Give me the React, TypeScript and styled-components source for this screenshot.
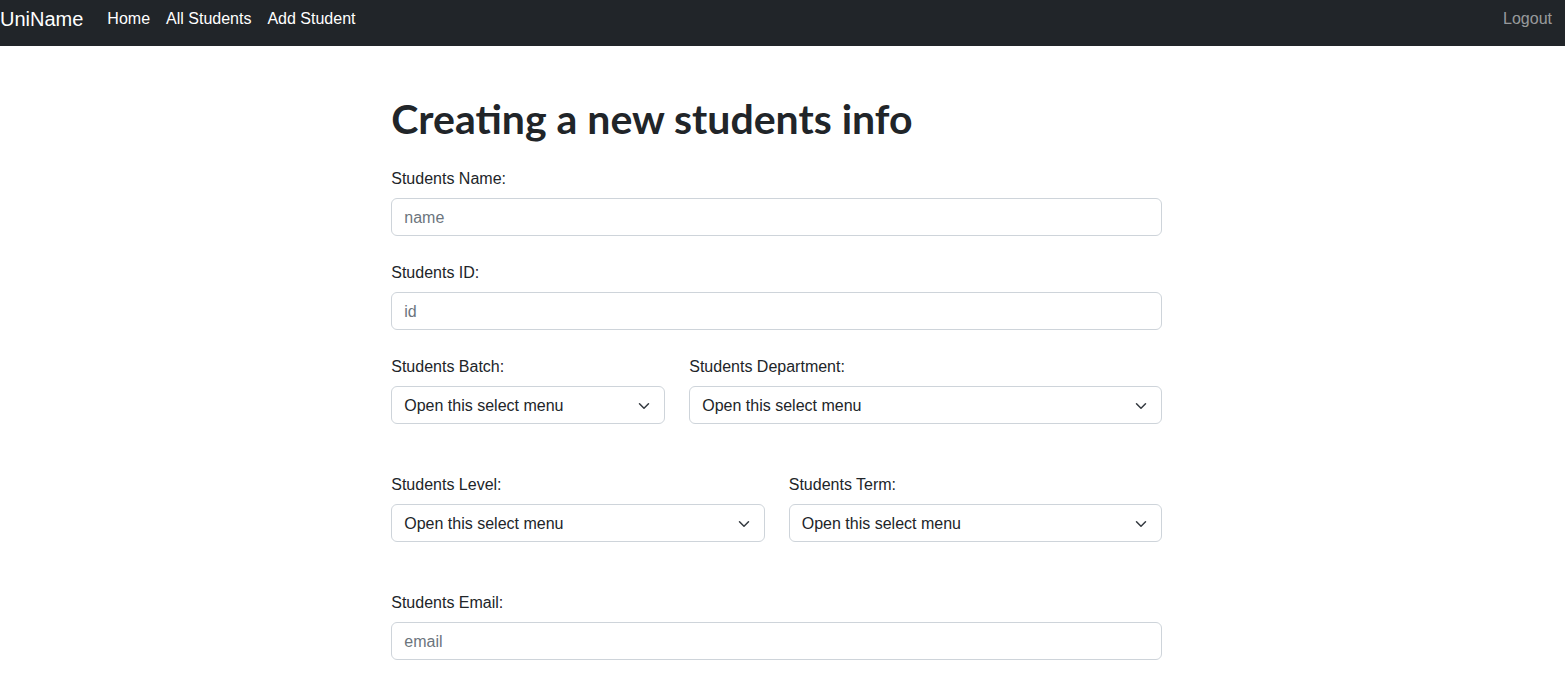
import React from 'react'
import styled, { createGlobalStyle } from 'styled-components'

const GlobalStyle = createGlobalStyle`
  * { box-sizing: border-box; }
  body {
    margin: 0;
    background: #fff;
    color: #212529;
    font-family: 'Liberation Sans', Arial, sans-serif;
    font-size: 16px;
    line-height: 1.5;
  }
`

const NavBar = styled.nav`
  height: 46px;
  background: #212529;
  display: flex;
  align-items: center;
  padding: 0 5px 8px 0;
`

const Brand = styled.a`
  color: #fff;
  font-size: 20px;
  line-height: 30px;
  margin-right: 16px;
  text-decoration: none;
`

const NavLinks = styled.div`
  display: flex;
  flex: 1;
`

const NavLink = styled.a<{ muted?: boolean }>`
  color: ${({ muted }) => (muted ? 'rgba(255, 255, 255, 0.55)' : '#fff')};
  padding: 0 8px;
  line-height: 24px;
  text-decoration: none;
  cursor: pointer;
`

const Main = styled.main`
  margin-left: 25%;
  width: 771px;
  padding-bottom: 40px;
`

const Heading = styled.h1`
  font-family: Lato, 'Liberation Sans', sans-serif;
  font-size: 41px;
  font-weight: 700;
  line-height: 48px;
  margin: 49px 0 23px;
`

const Field = styled.div<{ gap?: number }>`
  margin-bottom: ${({ gap }) => gap ?? 24}px;
`

const Row = styled.div<{ cols: string; gap?: number }>`
  display: grid;
  grid-template-columns: ${({ cols }) => cols};
  column-gap: 24px;
  margin-bottom: ${({ gap }) => gap ?? 48}px;
`

const Label = styled.label`
  display: block;
  padding-top: 1px;
  margin-bottom: 7px;
  line-height: 24px;
`

const Input = styled.input`
  display: block;
  width: 100%;
  height: 38px;
  padding: 7px 12px 5px;
  font: inherit;
  color: #212529;
  border: 1px solid #ced4da;
  border-radius: 6px;
  outline: none;

  &::placeholder {
    color: #6c757d;
  }
`

const SelectBox = styled.div`
  display: flex;
  align-items: center;
  justify-content: space-between;
  height: 38px;
  padding: 1px 12px 0;
  border: 1px solid #ced4da;
  border-radius: 6px;
  color: #212529;
  cursor: pointer;
`

const Chevron = () => (
  <svg width="16" height="12" viewBox="0 0 16 16" fill="none">
    <path d="m2 5 6 6 6-6" stroke="#343a40" strokeWidth="2" strokeLinecap="round" strokeLinejoin="round" />
  </svg>
)

const Select = ({ label }: { label: string }) => (
  <div>
    <Label>{label}</Label>
    <SelectBox>
      <span>Open this select menu</span>
      <Chevron />
    </SelectBox>
  </div>
)

export default function App() {
  return (
    <>
      <GlobalStyle />
      <NavBar>
        <Brand>UniName</Brand>
        <NavLinks>
          <NavLink>Home</NavLink>
          <NavLink>All Students</NavLink>
          <NavLink>Add Student</NavLink>
        </NavLinks>
        <NavLink muted>Logout</NavLink>
      </NavBar>
      <Main>
        <Heading>Creating a new students info</Heading>
        <Field>
          <Label>Students Name:</Label>
          <Input placeholder="name" />
        </Field>
        <Field>
          <Label>Students ID:</Label>
          <Input placeholder="id" />
        </Field>
        <Row cols="274px 1fr">
          <Select label="Students Batch:" />
          <Select label="Students Department:" />
        </Row>
        <Row cols="1fr 1fr">
          <Select label="Students Level:" />
          <Select label="Students Term:" />
        </Row>
        <Field>
          <Label>Students Email:</Label>
          <Input placeholder="email" />
        </Field>
      </Main>
    </>
  )
}
